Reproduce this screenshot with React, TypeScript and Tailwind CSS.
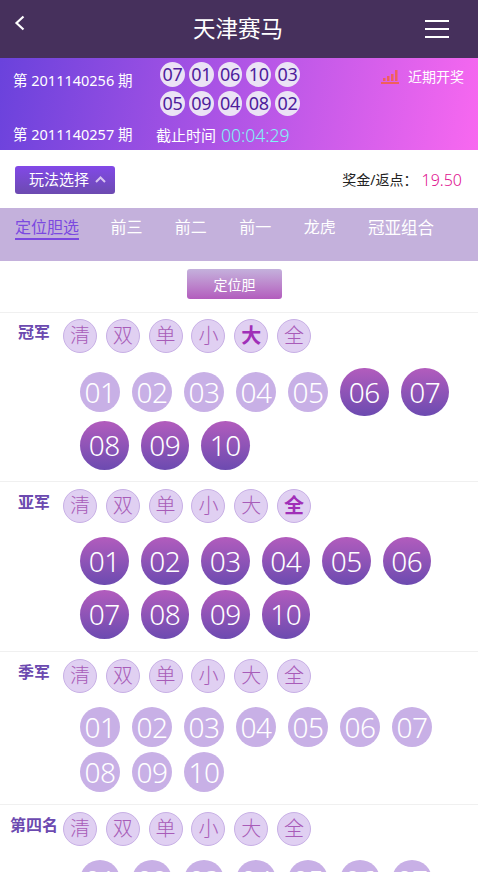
const font = { fontFamily: '"Noto Sans", "Noto Sans CJK SC", sans-serif' };
const pad = (n: number) => String(n).padStart(2, "0");
const ctrls = ["清", "双", "单", "小", "大", "全"];

function Ball({ n, on }: { n: number; on: boolean }) {
  return on ? (
    <div className="mx-[6px] my-[2.5px] flex h-[48.5px] w-[48.5px] items-center justify-center rounded-full bg-gradient-to-b from-[#b25cbd] to-[#6c4ab0] text-[28px] font-light tracking-[-0.6px] text-white">
      {pad(n)}
    </div>
  ) : (
    <div className="mx-[6px] my-[2.5px] flex h-[40px] w-[40px] items-center justify-center rounded-full bg-[#c8b0e6] text-[28px] font-light tracking-[-0.6px] text-white">
      {pad(n)}
    </div>
  );
}

function Section({ label, active, on, extra = "", first }: { label: string; active?: string; on: number[]; extra?: string; first?: boolean }) {
  return (
    <div className={`border-t border-[#f0f0f0] ${first ? "pt-[6px]" : "pt-[7px]"} ${extra}`}>
      <div className="flex h-[34px] items-start">
        <div className="flex h-[25px] w-[63px] shrink-0 items-center justify-center pl-[5px] text-[16px] font-bold whitespace-nowrap text-[#6c4ab0]">
          {label}
        </div>
        <div className="flex gap-[8.8px]">
          {ctrls.map((c) => (
            <div
              key={c}
              className={`flex h-[34px] w-[34px] items-center justify-center rounded-full border border-[#c8b0e6] bg-[#e0d0f2] text-[20px] ${
                c === active ? "font-bold text-[#a02fb8]" : "font-light text-[#a85cb8]"
              }`}
            >
              {c}
            </div>
          ))}
        </div>
      </div>
      <div className={`${first ? "mt-[12px]" : "mt-[11px]"} flex flex-wrap items-center pl-[74px]`}>
        {Array.from({ length: 10 }, (_, i) => (
          <Ball key={i} n={i + 1} on={on.includes(i + 1)} />
        ))}
      </div>
    </div>
  );
}

const r1 = ["07", "01", "06", "10", "03"];
const r2 = ["05", "09", "04", "08", "02"];

function Num({ t }: { t: string }) {
  return (
    <div className="flex h-[25px] w-[25px] items-center justify-center rounded-full bg-[#ebe3f5] text-[18px] tracking-[-0.3px] text-[#4f1d9c]">
      {t}
    </div>
  );
}

export default function App() {
  return (
    <div style={font} className="h-[872px] w-full overflow-hidden bg-white">
      <header className="relative flex h-[58px] items-center justify-center bg-[#46305c] text-[22.5px] text-white">
        <svg className="absolute top-[15px] left-[14px]" width="12" height="16" viewBox="0 0 12 16" fill="none" stroke="white" strokeWidth="2.2">
          <path d="M9.5 1.5 L2.5 8 L9.5 14.5" />
        </svg>
        <span className="-mt-[1px] -ml-[2px]">天津赛马</span>
        <div className="absolute top-[20px] right-[29px] flex w-[24px] flex-col gap-[6px]">
          <div className="h-[2px] bg-white" />
          <div className="h-[2px] bg-white" />
          <div className="h-[2px] bg-white" />
        </div>
      </header>

      <section className="relative flex h-[92px] bg-[linear-gradient(100deg,#6a42dc,#f868f0)] text-[14.5px] text-white">
        <div className="flex w-[156px] shrink-0 flex-col justify-between pt-[12px] pb-[4px] pl-[13px] whitespace-nowrap">
          <div>第 2011140256 期</div>
          <div>第 2011140257 期</div>
        </div>
        <div className="flex flex-col pt-[4px]">
          <div className="ml-[4px] flex w-[140px] flex-col gap-[4px]">
            <div className="flex gap-[4px]">{r1.map((t) => <Num key={t} t={t} />)}</div>
            <div className="flex gap-[4px]">{r2.map((t) => <Num key={t} t={t} />)}</div>
          </div>
          <div className="mt-[6px] flex items-center text-[15px] whitespace-nowrap">
            截止时间
            <span className="ml-[5px] text-[17.5px] font-light text-[#7ff5f5]">00:04:29</span>
          </div>
        </div>
        <div className="absolute top-[8px] right-[14px] flex items-center gap-[9px] text-[14px]">
          <svg width="18" height="14" viewBox="0 0 18 14" fill="#f0605c">
            <rect x="0" y="12" width="18" height="2" />
            <rect x="2" y="8" width="2.5" height="3" />
            <rect x="6" y="6" width="2.5" height="5" />
            <rect x="10" y="4" width="2.5" height="7" />
            <rect x="14" y="0" width="2.5" height="11" />
          </svg>
          近期开奖
        </div>
      </section>

      <div className="flex h-[58px] items-center justify-between pt-[1px] pr-[16px] pl-[15px]">
        <button className="flex h-[28px] w-[100px] items-center justify-start gap-[6px] rounded-[3px] bg-gradient-to-b from-[#8248e8] to-[#6c4ab0] pl-[14px] text-[15px] text-white">
          玩法选择
          <svg width="11" height="7" viewBox="0 0 11 7" fill="none" stroke="#d8c4f0" strokeWidth="2">
            <path d="M1 6 L5.5 1.5 L10 6" />
          </svg>
        </button>
        <div className="flex items-center text-[14px] text-[#222]">
          奖金/返点：
          <span className="ml-[4px] text-[16px] font-light text-[#e0108f]">19.50</span>
        </div>
      </div>

      <nav className="flex h-[53px] items-start gap-[32.4px] bg-[#c4b1dc] pt-[9px] pl-[15px] text-[16px] leading-[21px] text-white">
        <span className="border-b-2 border-[#7b48e0] text-[#7b48e0]">定位胆选</span>
        <span className="-ml-[1px]">前三</span>
        <span>前二</span>
        <span>前一</span>
        <span>龙虎</span>
        <span className="text-[16.5px]">冠亚组合</span>
      </nav>

      <div className="flex h-[51px] justify-center pt-[8px] pr-[9px]">
        <div className="flex h-[30px] w-[95px] items-center justify-center rounded-[3px] bg-gradient-to-b from-[#c4b1dc] to-[#b25cbd] text-[14px] text-white">
          定位胆
        </div>
      </div>

      <Section first label="冠军" active="大" on={[6, 7, 8, 9, 10]} extra="h-[169px]" />
      <Section label="亚军" active="全" on={[1, 2, 3, 4, 5, 6, 7, 8, 9, 10]} extra="h-[170px]" />
      <Section label="季军" on={[]} extra="h-[153px]" />
      <Section label="第四名" on={[]} />
    </div>
  );
}
